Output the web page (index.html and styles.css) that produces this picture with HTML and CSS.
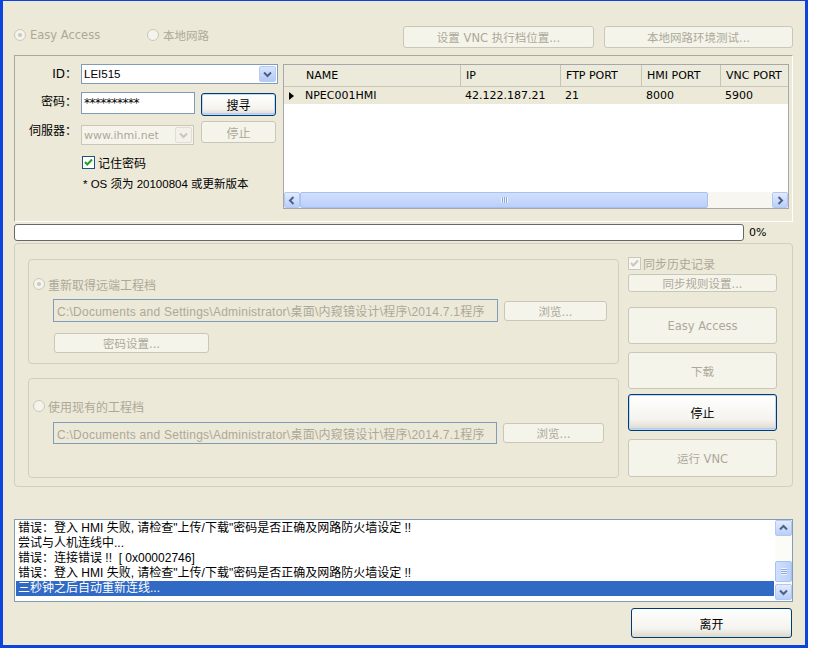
FILE: index.html
```html
<!DOCTYPE html>
<html>
<head>
<meta charset="utf-8">
<title>Easy Access</title>
<link rel="stylesheet" href="styles.css">
</head>
<body>
<div class="window">
  <div class="toprow">
    <div class="radio dis first"><span class="rb on"></span><span>Easy Access</span></div>
    <div class="radio dis"><span class="rb"></span><span>本地网路</span></div>
    <div class="topbtns">
      <button class="btn dis b-vnc">设置 VNC 执行档位置...</button>
      <button class="btn dis b-net">本地网路环境测试...</button>
    </div>
  </div>

  <div class="toppanel">
    <div class="form">
      <div class="frow r1">
        <span class="lbl">ID：</span>
        <div class="combo c-id"><span class="val">LEI515</span>
          <span class="dd"><svg width="9" height="7" viewBox="0 0 9 7"><path d="M1 1.5 L4.5 5 L8 1.5" fill="none" stroke="#4D6185" stroke-width="2"/></svg></span>
        </div>
      </div>
      <div class="frow r2">
        <span class="lbl">密码：</span>
        <div class="input pw">**********</div>
        <button class="btn focus b-search">搜寻</button>
      </div>
      <div class="frow r3">
        <span class="lbl">伺服器：</span>
        <div class="combo dis c-srv"><span class="val">www.ihmi.net</span>
          <span class="dd"><svg width="9" height="7" viewBox="0 0 9 7"><path d="M1 1.5 L4.5 5 L8 1.5" fill="none" stroke="#C9C7BA" stroke-width="2"/></svg></span>
        </div>
        <button class="btn dis b-stop">停止</button>
      </div>
      <div class="frow r4">
        <span class="cb"><svg width="11" height="11" viewBox="0 0 11 11"><path d="M2 5 L4.3 7.5 L9 2.5" fill="none" stroke="#21A121" stroke-width="2"/></svg></span>
        <span class="cbl">记住密码</span>
      </div>
      <div class="frow r5">* OS 须为 20100804 或更新版本</div>
    </div>

    <div class="grid">
      <div class="ghead">
        <div class="hc h0">NAME</div>
        <div class="hc h1">IP</div>
        <div class="hc h2">FTP PORT</div>
        <div class="hc h3">HMI PORT</div>
        <div class="hc h4">VNC PORT</div>
      </div>
      <div class="grow">
        <div class="rh"><span class="tri"></span></div>
        <div class="dc d0">NPEC001HMI</div>
        <div class="dc h1">42.122.187.21</div>
        <div class="dc h2">21</div>
        <div class="dc h3">8000</div>
        <div class="dc h4">5900</div>
      </div>
      <div class="gbody"></div>
      <div class="hscroll">
        <div class="sarrow"><svg width="8" height="9" viewBox="0 0 8 9"><path d="M5.5 1 L2 4.5 L5.5 8" fill="none" stroke="#4D6185" stroke-width="2"/></svg></div>
        <div class="hthumb"><span class="grip-v"></span></div>
        <div class="htrack"></div>
        <div class="sarrow"><svg width="8" height="9" viewBox="0 0 8 9"><path d="M2.5 1 L6 4.5 L2.5 8" fill="none" stroke="#4D6185" stroke-width="2"/></svg></div>
      </div>
    </div>
  </div>

  <div class="progrow">
    <div class="progress"></div>
    <span class="pct">0%</span>
  </div>

  <div class="lower">
    <div class="lcol">
      <div class="group g1">
        <div class="radio dis grad"><span class="rb on"></span><span>重新取得远端工程档</span></div>
        <div class="pathrow">
          <div class="input path">C:\Documents and Settings\Administrator\桌面\内窥镜设计\程序\2014.7.1程序</div>
          <button class="btn dis b-browse">浏览...</button>
        </div>
        <button class="btn dis b-pwset">密码设置...</button>
      </div>
      <div class="group g2">
        <div class="radio dis grad"><span class="rb"></span><span>使用现有的工程档</span></div>
        <div class="pathrow">
          <div class="input path p2">C:\Documents and Settings\Administrator\桌面\内窥镜设计\程序\2014.7.1程序</div>
          <button class="btn dis b-browse2">浏览...</button>
        </div>
      </div>
    </div>
    <div class="rcol">
      <div class="syncrow">
        <span class="cb dis"><svg width="11" height="11" viewBox="0 0 11 11"><path d="M2 5 L4.3 7.5 L9 2.5" fill="none" stroke="#C9C7BA" stroke-width="2"/></svg></span>
        <span class="cbl grey">同步历史记录</span>
      </div>
      <button class="btn dis b-rule">同步规则设置...</button>
      <button class="btn dis big b-ea">Easy Access</button>
      <button class="btn dis big b-dl">下载</button>
      <button class="btn focus big b-st">停止</button>
      <button class="btn dis big b-run">运行 VNC</button>
    </div>
  </div>

  <div class="log">
    <div class="lines">
      <div class="line">错误：登入 HMI 失败, 请检查"上传/下载"密码是否正确及网路防火墙设定 !!</div>
      <div class="line">尝试与人机连线中...</div>
      <div class="line">错误：连接错误 !!&nbsp; [ 0x00002746]</div>
      <div class="line">错误：登入 HMI 失败, 请检查"上传/下载"密码是否正确及网路防火墙设定 !!</div>
      <div class="line sel">三秒钟之后自动重新连线...</div>
    </div>
    <div class="vscroll">
      <div class="sarrow v"><svg width="9" height="8" viewBox="0 0 9 8"><path d="M1 5.5 L4.5 2 L8 5.5" fill="none" stroke="#4D6185" stroke-width="2"/></svg></div>
      <div class="vtrack1"></div>
      <div class="vthumb"><span class="grip-h"></span></div>
      <div class="vtrack2"></div>
      <div class="sarrow v"><svg width="9" height="8" viewBox="0 0 9 8"><path d="M1 2.5 L4.5 6 L8 2.5" fill="none" stroke="#4D6185" stroke-width="2"/></svg></div>
    </div>
  </div>

  <div class="bottom">
    <button class="btn exit">离开</button>
  </div>
</div>
</body>
</html>
```

FILE: styles.css
```css
* { box-sizing: border-box; }
html, body { margin: 0; padding: 0; background: #ffffff; }
body {
  width: 824px; height: 650px; overflow: hidden;
  font-family: "DejaVu Sans", "Noto Sans CJK SC", sans-serif;
  font-size: 11.5px; color: #000;
}
.window {
  width: 808px; height: 648px;
  background: #ECE9D8;
  border-style: solid; border-color: #0B45DE;
  border-width: 1px 3px 3px 3px;
  padding: 25px 12px 0 11px;
  display: flex; flex-direction: column;
}

/* buttons */
.btn {
  font: inherit; padding: 0; margin: 0;
  height: 22px;
  border: 1px solid #003C74; border-radius: 3px;
  background: linear-gradient(#FFFFFF, #F4F3EE 70%, #DCD8CC);
  color: #000;
  display: flex; align-items: center; justify-content: center;
  white-space: nowrap;
}
.btn.dis { border-color: #C9C7BA; background: #F5F4EA; color: #ACA899; }
.btn.focus { box-shadow: inset 0 0 0 1px #C2D7F6, inset 0 -1px 0 1px #B5CBF0; }

/* radios & checkboxes */
.radio { display: flex; align-items: center; gap: 4px; color: #ACA899; }
.rb {
  width: 12px; height: 12px; border-radius: 50%;
  border: 1px solid #CAC8BB; background: #F4F3EC;
  display: flex; align-items: center; justify-content: center;
}
.rb.on::after { content: ""; width: 4px; height: 4px; border-radius: 50%; background: #CAC8BB; }
.cb {
  width: 13px; height: 13px; border: 1px solid #1C5180; background: #fff;
  display: flex; align-items: center; justify-content: center;
}
.cb.dis { border-color: #CAC8BB; background: #F7F6F1; }
.cbl { font-size: 12px; }
.grey { color: #ACA899; }

/* top row */
.toprow { display: flex; align-items: center; height: 22px; }
.toprow .radio { margin-bottom: 4px; }
.toprow .radio.first { width: 133px; }
.topbtns { margin-left: auto; display: flex; gap: 10px; }
.b-vnc { width: 191px; }
.b-net { width: 189px; }

/* top panel */
.toppanel {
  margin-top: 7px; height: 167px;
  border: 1px solid; border-color: #ACA899 #FFFFFF #FFFFFF #ACA899;
  padding: 8px 3px 0 0;
  display: flex; align-items: flex-start;
}
.form { width: 268px; display: flex; flex-direction: column; }
.frow { display: flex; align-items: flex-start; }
.lbl { width: 62px; margin-right: 4px; text-align: right; font-size: 12px; line-height: 20px; }
.combo {
  height: 20px; border: 1px solid #7F9DB9; background: #fff;
  display: flex; align-items: center; justify-content: space-between;
  padding: 0 1px 0 2px;
  font-family: "Liberation Sans", "Noto Sans CJK SC", sans-serif; font-size: 11.5px;
}
.combo.dis { border-color: #C9C7BA; background: #F5F4EA; color: #ACA899; font-family: "DejaVu Sans", sans-serif; font-size: 11px; }
.dd {
  width: 17px; height: 16px; border-radius: 2px;
  background: linear-gradient(#D8E4FD, #B3C9F6);
  border: 1px solid #B6CBF5;
  display: flex; align-items: center; justify-content: center;
}
.combo.dis .dd { background: #F2F1EA; border-color: #E0DED2; }
.c-id { width: 197px; }
.r1 { height: 20px; }
.r2 { margin-top: 8px; }
.input {
  border: 1px solid #7F9DB9; background: #fff;
  display: flex; align-items: center; padding-left: 2px; white-space: nowrap; overflow: hidden;
}
.pw { width: 114px; height: 22px; font-size: 12px; letter-spacing: -0.5px; }
.b-search { width: 75px; height: 23px; margin-left: 6px; margin-top: 1px; font-size: 12px; }
.r3 { margin-top: 5px; }
.c-srv { width: 113px; margin-top: 4px; }
.b-stop { width: 75px; height: 22px; margin-left: 7px; font-size: 12px; }
.r4 { margin-top: 11px; margin-left: 67px; align-items: center; height: 13px; gap: 3px; }
.r5 {
  margin-top: 8px; margin-left: 68px; line-height: 14px;
  font-family: "Liberation Sans", "Noto Sans CJK SC", sans-serif; font-size: 11.5px;
}

/* grid */
.grid {
  width: 506px; height: 145px;
  border: 1px solid #A7A6AA; background: #fff;
  display: flex; flex-direction: column;
  font-size: 11px;
}
.ghead {
  height: 22px; display: flex; background: #EBEADB;
  border-bottom: 1px solid #CBC7B8;
}
.hc { display: flex; align-items: center; padding-left: 5px; white-space: nowrap; overflow: hidden; }
.ghead .hc + .hc { border-left: 1px solid #C7C5B2; }
.h0 { width: 176px; padding-left: 22px; }
.h1 { width: 100px; }
.h2 { width: 81px; }
.h3 { width: 79px; }
.h4 { flex: 1; }
.grow { height: 17px; display: flex; background: #ECE9D8; }
.rh { width: 17px; display: flex; align-items: center; padding-left: 5px; }
.tri { width: 0; height: 0; border-left: 5px solid #000; border-top: 4px solid transparent; border-bottom: 4px solid transparent; }
.dc { display: flex; align-items: center; padding-left: 5px; white-space: nowrap; }
.d0 { width: 159px; padding-left: 4px; }
.gbody { flex: 1; }
.hscroll { height: 16px; display: flex; background: #F7F6F0; }
.sarrow {
  width: 16px; height: 16px; border-radius: 2px;
  background: linear-gradient(#E2EBFE, #B9CFF8);
  border: 1px solid #B3C7F3;
  display: flex; align-items: center; justify-content: center;
}
.hthumb {
  width: 408px; height: 16px; border-radius: 2px;
  background: linear-gradient(#D1DFFC, #BBD0F9);
  border: 1px solid #A8C0F2;
  display: flex; align-items: center; justify-content: center;
}
.grip-v { width: 7px; height: 6px; background: repeating-linear-gradient(90deg, #EEF4FE 0 1px, #8CA8E0 1px 2px); }
.htrack { flex: 1; }

/* progress */
.progrow { margin-top: 2px; height: 17px; display: flex; align-items: center; }
.progress { width: 730px; height: 17px; border: 1px solid #686868; border-radius: 3px; background: #fff; }
.pct { margin-left: 5px; font-size: 11px; }

/* lower area */
.lower {
  margin-top: 2px; height: 244px; width: 779px;
  border: 1px solid #D0D0BF; border-radius: 4px;
  padding: 15px 0 0 13px;
  display: flex; align-items: flex-start;
}
.lcol { width: 591px; display: flex; flex-direction: column; }
.group {
  border: 1px solid #D0D0BF; border-radius: 4px;
  padding-left: 4px; display: flex; flex-direction: column; align-items: flex-start;
}
.g1 { height: 105px; }
.g2 { height: 100px; margin-top: 14px; }
.radio.grad { gap: 3px; font-size: 12px; height: 14px; }
.g1 .radio.grad { margin-top: 17px; }
.g2 .radio.grad { margin-top: 20px; }
.pathrow { display: flex; align-items: center; margin-left: 20px; }
.g1 .pathrow { margin-top: 8px; }
.g2 .pathrow { margin-top: 9px; }
.path {
  width: 445px; height: 23px; background: #ECE9D8; color: #ACA899; padding-left: 3px;
  font-family: "Liberation Sans", "Noto Sans CJK SC", sans-serif; font-size: 12px; letter-spacing: 0.25px;
}
.path.p2 { width: 444px; height: 22px; }
.b-browse { width: 103px; height: 20px; margin-left: 6px; }
.b-browse2 { width: 101px; height: 20px; margin-left: 6px; }
.b-pwset { width: 155px; height: 20px; margin-left: 21px; margin-top: 11px; }

.rcol { width: 149px; margin-left: 9px; display: flex; flex-direction: column; }
.syncrow { display: flex; align-items: center; gap: 2px; margin-top: -2px; height: 13px; }
.b-rule { height: 18px; margin-top: 4px; width: 149px; }
.big { height: 37px; width: 149px; }
.b-ea { margin-top: 15px; }
.b-dl { margin-top: 8px; }
.b-st { margin-top: 5px; font-size: 12px; }
.b-run { margin-top: 8px; height: 38px; }

/* log */
.log {
  margin-top: 32px; width: 779px; height: 83px;
  border: 1px solid #7F9DB9; background: #fff;
  display: flex;
  font-family: "Liberation Sans", "Noto Sans CJK SC", sans-serif; font-size: 12px;
}
.lines { flex: 1; padding: 1px 1px 0 1px; }
.line { height: 15px; line-height: 15px; padding-left: 2px; white-space: nowrap; overflow: hidden; }
.line.sel { background: #316AC5; color: #fff; }
.vscroll { width: 17px; display: flex; flex-direction: column; background: #FBFBF8; padding-bottom: 1px; }
.sarrow.v { width: 17px; height: 16px; }
.vtrack1 { height: 25px; }
.vthumb {
  height: 21px; border-radius: 2px;
  background: linear-gradient(90deg, #D1DFFC, #BBD0F9);
  border: 1px solid #A8C0F2;
  display: flex; align-items: center; justify-content: center;
}
.grip-h { width: 6px; height: 7px; background: repeating-linear-gradient(180deg, #EEF4FE 0 1px, #8CA8E0 1px 2px); }
.vtrack2 { flex: 1; }

/* bottom */
.bottom { display: flex; justify-content: flex-end; margin-top: 6px; padding-right: 1px; }
.exit { width: 161px; height: 30px; font-size: 12px; }
```
